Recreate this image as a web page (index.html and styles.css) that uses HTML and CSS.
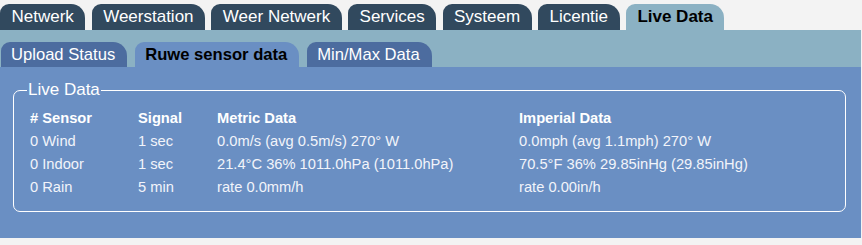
FILE: index.html
```html
<!DOCTYPE html>
<html>
	<head>
		<title>Live Data</title>
		<link rel="stylesheet" href="styles.css">
	</head>
	<body>
		<div class="page">
			<ul class="mainTabs">
				<li class="tab">Netwerk</li>
				<li class="tab">Weerstation</li>
				<li class="tab">Weer Netwerk</li>
				<li class="tab">Services</li>
				<li class="tab">Systeem</li>
				<li class="tab">Licentie</li>
				<li class="tab active">Live Data</li>
			</ul>
			<div class="subBar">
				<ul class="subTabs">
					<li class="subTab">Upload Status</li>
					<li class="subTab active">Ruwe sensor data</li>
					<li class="subTab">Min/Max Data</li>
				</ul>
			</div>
			<div class="content">
				<fieldset class="liveData">
					<legend>Live Data</legend>
					<table class="sensorTable">
						<tr>
							<th class="colSensor"># Sensor</th>
							<th class="colSignal">Signal</th>
							<th class="colMetric">Metric Data</th>
							<th>Imperial Data</th>
						</tr>
						<tr>
							<td>0 Wind</td>
							<td>1 sec</td>
							<td>0.0m/s (avg 0.5m/s) 270° W</td>
							<td>0.0mph (avg 1.1mph) 270° W</td>
						</tr>
						<tr>
							<td>0 Indoor</td>
							<td>1 sec</td>
							<td>21.4°C 36% 1011.0hPa (1011.0hPa)</td>
							<td>70.5°F 36% 29.85inHg (29.85inHg)</td>
						</tr>
						<tr>
							<td>0 Rain</td>
							<td>5 min</td>
							<td>rate 0.0mm/h</td>
							<td>rate 0.00in/h</td>
						</tr>
					</table>
				</fieldset>
			</div>
		</div>
	</body>
</html>
```

FILE: styles.css
```css
body {
	margin: 0;
	background-color: #f3f3f3;
	font-family: "Liberation Sans", Arial, sans-serif;
}

.page {
	width: 861px;
}

.mainTabs {
	display: flex;
	gap: 6.3px;
	list-style: none;
	margin: 0;
	padding: 4px 0 0 0;
}

.tab {
	background-color: #31495e;
	color: #ffffff;
	font-size: 17px;
	height: 26px;
	line-height: 26px;
	padding: 0 11.5px;
	border-radius: 9px 14px 0 0;
}

.tab.active {
	background-color: #8bb1c3;
	color: #000000;
	font-weight: bold;
}

.subBar {
	background-color: #8bb1c3;
	padding-top: 12px;
}

.subTabs {
	display: flex;
	gap: 8px;
	list-style: none;
	margin: 0;
	padding: 0 0 0 1px;
}

.subTab {
	background-color: #4c6c9f;
	color: #ffffff;
	font-size: 16.6px;
	height: 25px;
	line-height: 25px;
	padding: 0 12px 0 10px;
	border-radius: 9px 14px 0 0;
}

.subTab.active {
	background-color: #6a8fc3;
	color: #000000;
	font-weight: bold;
}

.content {
	background-color: #6a8fc3;
	height: 171px;
	padding: 13px 15px 0 13px;
	box-sizing: border-box;
}

.liveData {
	border: 1px solid #ffffff;
	border-radius: 7px;
	margin: 0;
	padding: 6px 16px 13px 16px;
}

.liveData legend {
	color: #ffffff;
	font-size: 17px;
	padding: 0 1px;
	margin-left: -3px;
}

.sensorTable {
	border-collapse: collapse;
	color: #f2f4fa;
	font-size: 14.7px;
}

.sensorTable th {
	text-align: left;
	color: #ffffff;
	padding: 0;
}

.sensorTable th,
.sensorTable td {
	height: 23px;
	padding: 0;
	white-space: nowrap;
}

.colSensor {
	width: 108px;
}

.colSignal {
	width: 79px;
}

.colMetric {
	width: 302px;
}
```
